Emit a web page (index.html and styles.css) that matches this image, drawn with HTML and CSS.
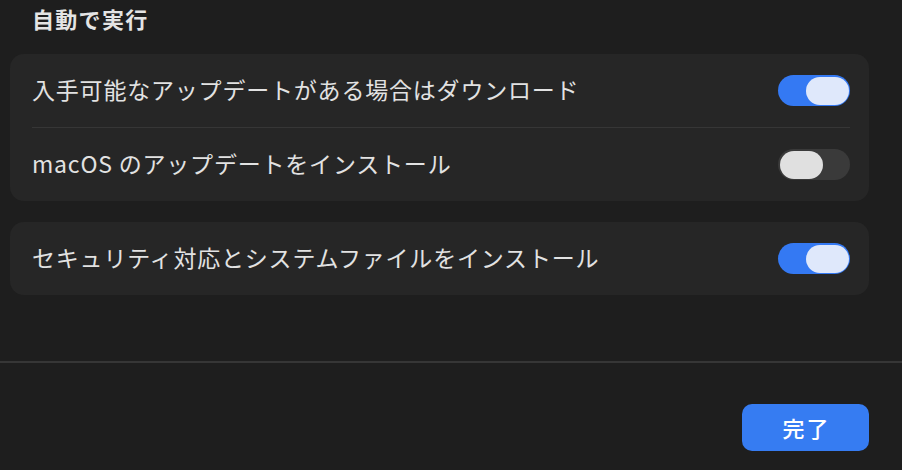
FILE: index.html
```html
<!DOCTYPE html>
<html lang="ja">
  <head>
    <meta charset="UTF-8" />
    <meta name="viewport" content="width=device-width, initial-scale=1.0" />
    <title>自動で実行</title>
    <link rel="stylesheet" href="styles.css">
  </head>
  <body>
    <div class="panel">
      <h2 class="section-title">自動で実行</h2>

      <div class="card">
        <div class="row">
          <span class="label">入手可能なアップデートがある場合はダウンロード</span>
          <span class="toggle on"><span class="knob"></span></span>
        </div>
        <div class="row">
          <span class="label">macOS のアップデートをインストール</span>
          <span class="toggle"><span class="knob"></span></span>
        </div>
      </div>

      <div class="card">
        <div class="row">
          <span class="label">セキュリティ対応とシステムファイルをインストール</span>
          <span class="toggle on"><span class="knob"></span></span>
        </div>
      </div>
    </div>

    <div class="footer">
      <button class="done">完了</button>
    </div>
  </body>
</html>
```

FILE: styles.css
```css
body {
  font-family: "Noto Sans CJK JP", "Noto Sans", sans-serif;
  margin: 0;
  background-color: #1e1e1e;
  color: #e2e2e2;
  width: 902px;
  height: 470px;
  overflow: hidden;
}
.panel {
  padding: 0 33px 0 10px;
  height: 361px;
  border-bottom: 2px solid #363636;
}
.section-title {
  margin: 0 0 21px 22px;
  padding-top: 3px;
  font-size: 22px;
  font-weight: 600;
  line-height: 30px;
  letter-spacing: 1.3px;
  color: #e4e4e4;
}
.card {
  background: #262626;
  border-radius: 14px;
  padding: 0 19px 0 22px;
  margin-bottom: 21px;
}
.row {
  display: flex;
  align-items: center;
  justify-content: space-between;
  height: 73px;
}
.row + .row {
  border-top: 1px solid #363636;
}
.label {
  font-size: 23px;
  letter-spacing: 0.8px;
  line-height: 30px;
  padding-bottom: 3px;
  color: #e2e2e2;
}
.toggle {
  position: relative;
  width: 72px;
  height: 31px;
  border-radius: 16px;
  background: #3a3a3a;
}
.toggle.on {
  background: #3479f3;
}
.knob {
  position: absolute;
  top: 1.5px;
  left: 2px;
  width: 43px;
  height: 28px;
  border-radius: 14px;
  background: #e0e0e0;
}
.toggle.on .knob {
  left: auto;
  right: 1.5px;
  background: #dfe8fb;
}
.footer {
  display: flex;
  justify-content: flex-end;
  padding: 41px 33px 0 0;
}
.done {
  width: 127px;
  height: 47px;
  border: none;
  border-radius: 10px;
  background: #367cf2;
  color: #ffffff;
  font-family: inherit;
  font-size: 22px;
  font-weight: 500;
  letter-spacing: 2px;
  padding: 0 0 2px 2px;
}
```
